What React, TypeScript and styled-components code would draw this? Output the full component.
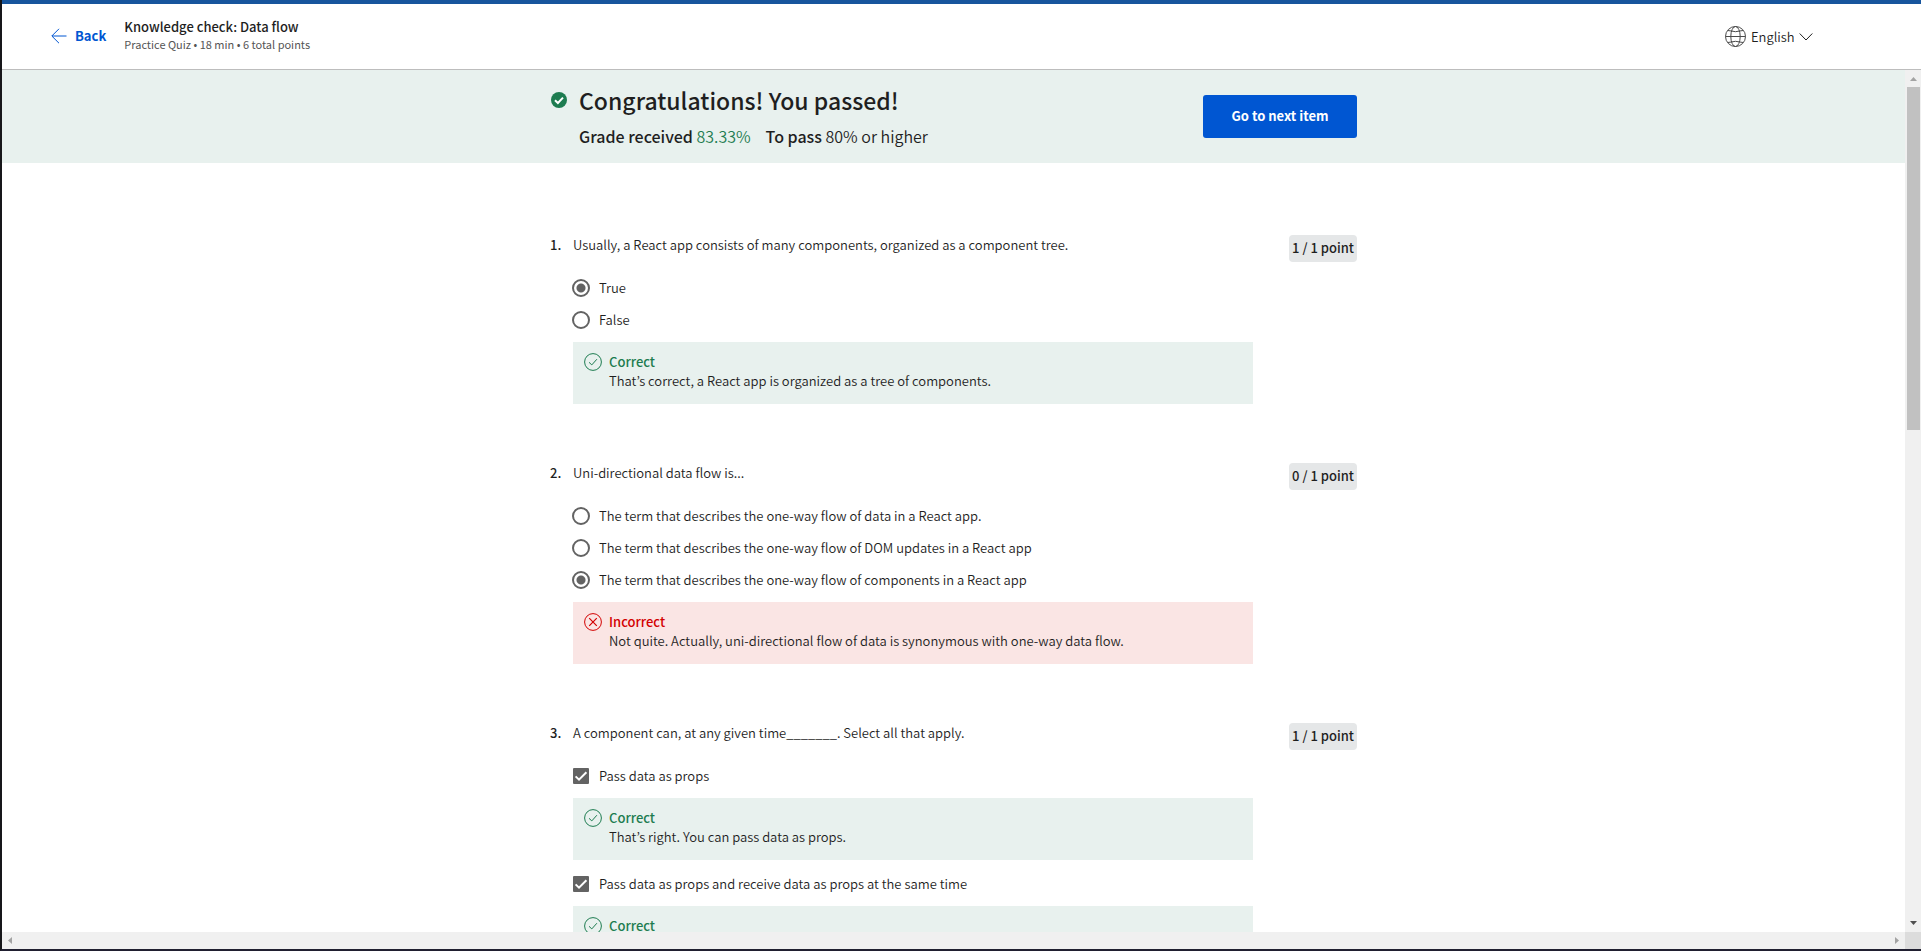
import React from "react";
import styled, { createGlobalStyle } from "styled-components";

const GlobalStyle = createGlobalStyle`
  *, *::before, *::after { box-sizing: border-box; }
  body {
    margin: 0;
    background: #ffffff;
    color: #1f1f1f;
    font-family: "Noto Sans CJK KR", "Source Sans Pro", sans-serif;
    font-size: 13px;
    font-weight: 350;
    line-height: 20px;
  }
  h1, h2, p, ol { margin: 0; padding: 0; }
  button, select, input { font: inherit; }
`;

const Shell = styled.div`
  display: flex;
  flex-direction: column;
  height: 100vh;
  border-left: 2px solid #17171a;
  border-bottom: 2px solid #201f30;
  overflow: hidden;
`;

const Header = styled.header`
  display: flex;
  flex: none;
  align-items: center;
  height: 70px;
  padding: 0 108px 0 49px;
  border-top: 4px solid #17559d;
  border-bottom: 1px solid #bdbdbd;
`;

const BackLink = styled.a`
  display: flex;
  align-items: center;
  gap: 8px;
  margin-right: 18px;
  padding-bottom: 1px;
  color: #0056d2;
  font-weight: 700;
  text-decoration: none;
`;

const ItemTitle = styled.h2`
  font-size: 13px;
  line-height: 18px;
  font-weight: 500;
`;

const ItemMeta = styled.p`
  padding-bottom: 4px;
  color: #555555;
  font-size: 11px;
  font-weight: 400;
  line-height: 16px;
`;

const Language = styled.label`
  display: flex;
  align-items: center;
  gap: 5px;
  margin-left: auto;
`;

const LanguageSelect = styled.select`
  appearance: none;
  width: 43px;
  padding: 0;
  border: 0;
  background: none;
  color: #1f1f1f;
`;

const Body = styled.div`
  display: grid;
  flex: 1;
  min-height: 0;
  grid-template-columns: minmax(0, 1fr) 16px;
  grid-template-rows: minmax(0, 1fr) 17px;
`;

const Viewport = styled.div`
  overflow: auto;
  scrollbar-width: none;
`;

const Bar = styled.div<{ $vertical?: boolean }>`
  display: flex;
  flex-direction: ${(p) => (p.$vertical ? "column" : "row")};
  justify-content: space-between;
  align-items: center;
  padding: ${(p) => (p.$vertical ? "7px 1px 7px 2px" : "0 6px")};
  background: #f0f0f0;
`;

const Thumb = styled.div`
  width: 13px;
  height: 40.5%;
  margin: 6px 0 auto;
  background: #c1c1c1;
`;

const Corner = styled.div`
  background: #dcdcdc;
`;

const Banner = styled.section`
  background: #e8f1ee;
`;

const Column = styled.div`
  width: 100%;
  max-width: 807px;
  margin: 0 auto;
`;

const BannerRow = styled(Column)`
  display: flex;
  align-items: flex-start;
  height: 93px;
  padding-top: 12px;
`;

const BannerIcon = styled.svg`
  flex: none;
  margin: 10px 12px 0 1px;
`;

const Congrats = styled.h1`
  font-size: 23px;
  line-height: 36px;
  font-weight: 500;
`;

const Grade = styled.p`
  display: flex;
  gap: 15px;
  font-size: 16px;
  line-height: 36px;
`;

const Strong = styled.strong`
  font-weight: 500;
`;

const Passed = styled.span`
  color: #1d7c50;
`;

const NextButton = styled.button`
  width: 154px;
  height: 43px;
  margin: 13px 0 0 auto;
  padding: 0 0 1px;
  border: 0;
  border-radius: 3px;
  background: #0056d2;
  color: #ffffff;
  font-weight: 700;
`;

const Questions = styled(Column).attrs({ as: "ol" })`
  display: flex;
  flex-direction: column;
  gap: 59px;
  padding: 72px 0 59px;
  list-style: none;
`;

const QuestionRow = styled.li`
  display: grid;
  grid-template-columns: 23px minmax(0, 1fr) 104px;
`;

const QuestionNumber = styled.span`
  font-weight: 500;
`;

const Fieldset = styled.fieldset`
  min-width: 0;
  margin: 0;
  padding: 0;
  border: 0;
`;

const Prompt = styled.legend`
  height: 37px;
  padding: 0;
`;

const Points = styled.span`
  justify-self: end;
  align-self: start;
  width: 68px;
  padding-bottom: 2px;
  border-radius: 4px;
  background: #e5e7e8;
  font-weight: 500;
  line-height: 25px;
  text-align: center;
`;

const OptionLabel = styled.label`
  display: flex;
  align-items: center;
  gap: 9px;
  height: 32px;
`;

const Radio = styled.input.attrs({ type: "radio" })`
  appearance: none;
  flex: none;
  width: 18px;
  height: 18px;
  margin: 0 0 0 -1px;
  border: 2px solid #636363;
  border-radius: 50%;
  &:checked {
    background: radial-gradient(circle, #636363 4px, transparent 5px);
  }
`;

const CheckWrap = styled.span`
  display: grid;
  flex: none;
  width: 17px;
  > * { grid-area: 1 / 1; }
`;

const Checkbox = styled.input.attrs({ type: "checkbox" })`
  appearance: none;
  width: 16px;
  height: 16px;
  margin: 0;
  border: 2px solid #636363;
  border-radius: 1px;
  &:checked { background: #636363; }
`;

const Tick = styled.svg`
  pointer-events: none;
`;

const Feedback = styled.div<{ $ok: boolean }>`
  display: flex;
  gap: 7px;
  height: 62px;
  margin: 6px 0 8px;
  padding: 10px 11px;
  background: ${(p) => (p.$ok ? "#e8f1ee" : "#fae5e4")};
  &:last-child { margin-bottom: 0; }
  > svg { flex: none; margin-top: 1px; }
`;

const Verdict = styled.p<{ $ok: boolean }>`
  color: ${(p) => (p.$ok ? "#1d7c50" : "#d30001")};
  font-weight: 500;
  line-height: 19px;
`;

const Explanation = styled.p`
  line-height: 19px;
`;

type Option = { text: string; checked?: boolean; ok?: boolean; note?: string };
type Question = { prompt: string; points: string; multi?: boolean; options: Option[] };

const questions: Question[] = [
  {
    prompt: "Usually, a React app consists of many components, organized as a component tree.",
    points: "1 / 1 point",
    options: [
      { text: "True", checked: true },
      { text: "False", ok: true, note: "That’s correct, a React app is organized as a tree of components." },
    ],
  },
  {
    prompt: "Uni-directional data flow is...",
    points: "0 / 1 point",
    options: [
      { text: "The term that describes the one-way flow of data in a React app." },
      { text: "The term that describes the one-way flow of DOM updates in a React app" },
      {
        text: "The term that describes the one-way flow of components in a React app",
        checked: true,
        ok: false,
        note: "Not quite. Actually, uni-directional flow of data is synonymous with one-way data flow.",
      },
    ],
  },
  {
    prompt: "A component can, at any given time_______. Select all that apply.",
    points: "1 / 1 point",
    multi: true,
    options: [
      { text: "Pass data as props", checked: true, ok: true, note: "That’s right. You can pass data as props." },
      {
        text: "Pass data as props and receive data as props at the same time",
        checked: true,
        ok: true,
      },
    ],
  },
];

const VerdictIcon = ({ ok }: { ok: boolean }) => (
  <svg width="18" height="18" viewBox="0 0 18 18" fill="none" stroke={ok ? "#1d7c50" : "#d30001"} aria-hidden="true">
    <circle cx="9" cy="9" r="8.4" />
    {ok ? <path d="M5 9.3 7.8 11.9 12.9 6.2" /> : <path d="M5.2 5.2 12.8 12.8M12.8 5.2 5.2 12.8" strokeWidth="1.2" />}
  </svg>
);

const Arrow = ({ d, w, h, color }: { d: string; w: number; h: number; color: string }) => (
  <svg width={w} height={h} viewBox={`0 0 ${w} ${h}`} fill={color} aria-hidden="true">
    <path d={d} />
  </svg>
);

const OptionItem = ({ option, multi, name }: { option: Option; multi?: boolean; name: string }) => (
  <>
    <OptionLabel>
      {multi ? (
        <CheckWrap>
          <Checkbox defaultChecked={option.checked} />
          <Tick width="16" height="16" viewBox="0 0 16 16" fill="none" stroke="#ffffff" strokeWidth="2" aria-hidden="true">
            <path d="M2.6 8.4 6 11.7 13.4 4.2" />
          </Tick>
        </CheckWrap>
      ) : (
        <Radio name={name} defaultChecked={option.checked} />
      )}
      {option.text}
    </OptionLabel>
    {option.ok !== undefined && (
      <Feedback $ok={option.ok}>
        <VerdictIcon ok={option.ok} />
        <div>
          <Verdict $ok={option.ok}>{option.ok ? "Correct" : "Incorrect"}</Verdict>
          {option.note && <Explanation>{option.note}</Explanation>}
        </div>
      </Feedback>
    )}
  </>
);

export default function App() {
  return (
    <Shell>
      <GlobalStyle />
      <Header>
        <BackLink href="#">
          <svg width="16" height="16" viewBox="0 0 16 16" fill="none" stroke="#0056d2" aria-hidden="true">
            <path d="M15.5 8H1M8 .8.8 8 8 15.2" />
          </svg>
          Back
        </BackLink>
        <div>
          <ItemTitle>Knowledge check: Data flow</ItemTitle>
          <ItemMeta>Practice Quiz • 18 min • 6 total points</ItemMeta>
        </div>
        <Language>
          <svg width="21" height="21" viewBox="0 0 21 21" fill="none" stroke="#4a4a4a" aria-hidden="true">
            <circle cx="10.5" cy="10.5" r="10" />
            <ellipse cx="10.5" cy="10.5" rx="4.7" ry="10" />
            <path d="M.5 10.5h20M3 4.5q7.5 2.4 15 0M3 16.5q7.5-2.4 15 0" />
          </svg>
          <LanguageSelect aria-label="Language">
            <option>English</option>
          </LanguageSelect>
          <svg width="14" height="8" viewBox="0 0 14 8" fill="none" stroke="#1f1f1f" aria-hidden="true">
            <path d="M.7.5 7 7 13.3.5" />
          </svg>
        </Language>
      </Header>
      <Body>
        <Viewport>
          <Banner>
            <BannerRow>
              <BannerIcon width="16" height="16" viewBox="0 0 16 16" aria-hidden="true">
                <circle cx="8" cy="8" r="8" fill="#1d7c50" />
                <path d="M4 8.2 6.9 11 12 5.6" fill="none" stroke="#ffffff" strokeWidth="2" />
              </BannerIcon>
              <div>
                <Congrats>Congratulations! You passed!</Congrats>
                <Grade>
                  <span><Strong>Grade received</Strong> <Passed>83.33%</Passed></span>
                  <span><Strong>To pass</Strong> 80% or higher</span>
                </Grade>
              </div>
              <NextButton type="button">Go to next item</NextButton>
            </BannerRow>
          </Banner>
          <Questions>
            {questions.map((q, i) => (
              <QuestionRow key={q.prompt}>
                <QuestionNumber>{i + 1}.</QuestionNumber>
                <Fieldset>
                  <Prompt>{q.prompt}</Prompt>
                  {q.options.map((o) => (
                    <OptionItem key={o.text} option={o} multi={q.multi} name={`question-${i + 1}`} />
                  ))}
                </Fieldset>
                <Points>{q.points}</Points>
              </QuestionRow>
            ))}
          </Questions>
        </Viewport>
        <Bar $vertical aria-hidden="true">
          <Arrow w={7} h={4} d="M0 4 3.5 0 7 4z" color="#a3a3a3" />
          <Thumb />
          <Arrow w={7} h={4} d="M0 0h7L3.5 4z" color="#505050" />
        </Bar>
        <Bar aria-hidden="true">
          <Arrow w={4} h={7} d="M4 0v7L0 3.5z" color="#a3a3a3" />
          <Arrow w={4} h={7} d="M0 0v7l4-3.5z" color="#a3a3a3" />
        </Bar>
        <Corner />
      </Body>
    </Shell>
  );
}
